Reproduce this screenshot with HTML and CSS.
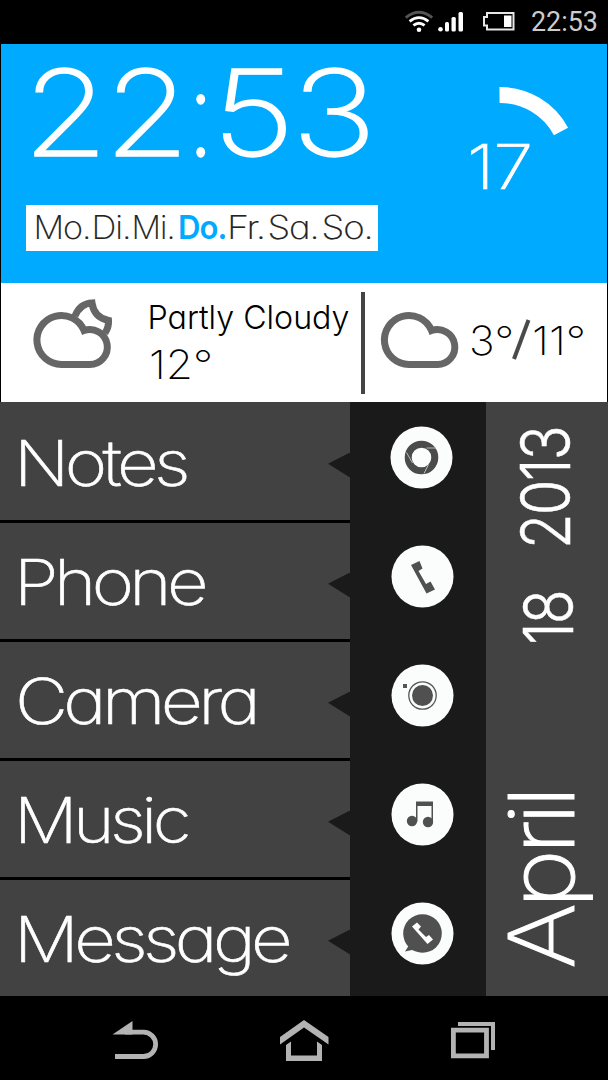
FILE: index.html
```html
<!DOCTYPE html>
<html lang="de">
<head>
<meta charset="utf-8">
<title>Home</title>
<link rel="stylesheet" href="styles.css">
</head>
<body>
<div class="phone">
  <header class="status">
    <svg class="signals" width="140" height="44" viewBox="400 0 140 44">
      <g fill="none" stroke="#fff" stroke-width="2.8">
        <path stroke="#555" d="M405.800 17.600Q419 6.800 432.200 17.600"/>
        <path d="M409.600 21.400Q419 13.800 428.400 21.400"/>
        <path d="M413.400 25.400Q419 21 424.600 25.400"/>
      </g>
      <circle cx="419" cy="29.800" r="2.300" fill="#fff"/>
      <g fill="#fff">
        <circle cx="440.500" cy="29.200" r="2.300"/>
        <rect x="445" y="22" width="4" height="9.500" rx="1.500"/>
        <rect x="451.500" y="17" width="4.300" height="14.500" rx="1.500"/>
        <rect x="458.500" y="12" width="4.500" height="19.500" rx="1.500"/>
      </g>
      <path fill="none" stroke="#e6e6e6" stroke-width="2" d="M487 13H513.500V29.500H487V25.500H484V17H487Z"/>
      <rect x="504" y="15.500" width="7.500" height="11.500" fill="#fff"/>
    </svg>
    <svg width="68" height="44"><text class="status-time" x="0" y="31" textLength="67" lengthAdjust="spacingAndGlyphs">22:53</text></svg>
  </header>

  <section class="clock">
    <div class="clock-main">
      <svg class="time" width="390" height="161" viewBox="0 44 390 161">
        <text x="23" y="156" textLength="163" lengthAdjust="spacingAndGlyphs">22</text>
        <text x="187" y="156" textLength="25" lengthAdjust="spacingAndGlyphs">:</text>
        <text x="212" y="156" textLength="161" lengthAdjust="spacingAndGlyphs">53</text>
      </svg>
      <svg class="days" width="352" height="46" viewBox="26.500 205.500 352 46">
        <text x="34" y="239" textLength="57" lengthAdjust="spacingAndGlyphs">Mo.</text>
        <text x="92" y="239" textLength="39" lengthAdjust="spacingAndGlyphs">Di.</text>
        <text x="132" y="239" textLength="43" lengthAdjust="spacingAndGlyphs">Mi.</text>
        <text class="today" x="178.500" y="239" textLength="48.500" lengthAdjust="spacingAndGlyphs">Do.</text>
        <text x="227.500" y="239" textLength="38" lengthAdjust="spacingAndGlyphs">Fr.</text>
        <text x="268" y="239" textLength="51" lengthAdjust="spacingAndGlyphs">Sa.</text>
        <text x="322" y="239" textLength="51" lengthAdjust="spacingAndGlyphs">So.</text>
      </svg>
    </div>
    <svg class="gauge" width="167" height="239" viewBox="440 44 167 239">
      <path fill="none" stroke="#fff" stroke-width="16" d="M499.500 95A69 69 0 0 1 561 131.500"/>
      <text x="467" y="189" textLength="65" lengthAdjust="spacingAndGlyphs">17</text>
    </svg>
  </section>

  <section class="weather">
    <svg class="now" width="360" height="119" viewBox="1 283 360 119">
      <g fill="none" stroke="#666" stroke-width="7">
        <path d="M84 330.500A24.500 24.500 0 1 0 61.500 364.500H89.500A17.500 17.500 0 1 0 84 330.500Z"/>
        <path d="M75 316Q80 303.500 92 303Q94 317.500 108.500 320.500Q109 327 105 333"/>
      </g>
      <text class="cond" x="147.500" y="329" textLength="202" lengthAdjust="spacingAndGlyphs">Partly Cloudy</text>
      <text class="temp" x="149" y="378.500" textLength="64" lengthAdjust="spacingAndGlyphs">12°</text>
    </svg>
    <i class="divider"></i>
    <svg class="next" width="241" height="119" viewBox="366 283 241 119">
      <path fill="none" stroke="#666" stroke-width="7" d="M431.500 330.500A24.500 24.500 0 1 0 409 364.500H437A17.500 17.500 0 1 0 431.500 330.500Z"/>
      <text class="temp" x="469" y="355" textLength="45" lengthAdjust="spacingAndGlyphs">3°</text>
      <path stroke="#4a4a4a" stroke-width="4" d="M528.500 320L514 359"/>
      <text class="temp" x="532" y="355" textLength="54" lengthAdjust="spacingAndGlyphs">11°</text>
    </svg>
  </section>

  <main class="home">
    <nav class="menu">
      <div class="item"><svg width="320" height="116"><text x="14" y="82" textLength="172" lengthAdjust="spacingAndGlyphs">Notes</text></svg><i class="notch"></i></div>
      <div class="item"><svg width="320" height="116"><text x="14" y="82" textLength="190" lengthAdjust="spacingAndGlyphs">Phone</text></svg><i class="notch"></i></div>
      <div class="item"><svg width="320" height="116"><text x="15" y="82" textLength="241" lengthAdjust="spacingAndGlyphs">Camera</text></svg><i class="notch"></i></div>
      <div class="item"><svg width="320" height="116"><text x="14" y="82" textLength="173" lengthAdjust="spacingAndGlyphs">Music</text></svg><i class="notch"></i></div>
      <div class="item"><svg width="320" height="116"><text x="14" y="82" textLength="274" lengthAdjust="spacingAndGlyphs">Message</text></svg><i class="notch"></i></div>
    </nav>
    <div class="dock">
      <svg class="app first" viewBox="-31.500 -31.500 63 63">
        <circle class="disc" r="31"/>
        <circle r="13.300" fill="none" stroke="#4b4b4b" stroke-width="7"/>
        <path fill="none" stroke="#bbb" stroke-width="1" d="M5-9.500H14.500M-15-5L-9 5.500M7 7L2.500 16"/>
      </svg>
      <svg class="app" viewBox="-31.500 -31.500 63 63">
        <circle class="disc" r="31"/>
        <path fill="#505050" d="M-11.500-11.500L-3-15.500L0-8L-4-5.500L3.500 7.500L8 5L12.500 13L4 17Z"/>
      </svg>
      <svg class="app" viewBox="-31.500 -31.500 63 63">
        <circle class="disc" r="31"/>
        <circle r="10.500" fill="#505050"/>
        <circle r="13.700" fill="none" stroke="#555" stroke-width="1.300"/>
        <rect x="-19.500" y="-11.500" width="4" height="4" fill="#555"/>
      </svg>
      <svg class="app" viewBox="-31.500 -31.500 63 63">
        <circle class="disc" r="31"/>
        <circle cx="-10.500" cy="6.500" r="5.200" fill="#505050"/>
        <circle cx="5.500" cy="7.500" r="5.200" fill="#505050"/>
        <path fill="#505050" d="M-6.500-13H10.500V8H9V-8.500H-5V7H-6.500Z"/>
      </svg>
      <svg class="app" viewBox="-31.500 -31.500 63 63">
        <circle class="disc" r="31"/>
        <circle r="19.300" fill="#505050"/>
        <path fill="#505050" d="M-17.500 6L-14 12.500L-17.500 18L-8 16Z"/>
        <path fill="#fff" d="M-10.500-7L-5.500-11L-1.500-7L-4-4L3.500 3.500L6.500 1.500L10.500 6L5 10.500Z"/>
      </svg>
    </div>
    <svg class="date" width="122" height="594" viewBox="486 402 122 594">
      <text class="num" transform="translate(570 549) rotate(-90)" textLength="122" lengthAdjust="spacingAndGlyphs">2013</text>
      <text class="num" transform="translate(573 645) rotate(-90)" textLength="54" lengthAdjust="spacingAndGlyphs">18</text>
      <text class="month" transform="translate(574 969) rotate(-90)" textLength="178" lengthAdjust="spacingAndGlyphs">April</text>
    </svg>
  </main>

  <footer class="keys">
    <svg width="608" height="84" viewBox="0 996 608 84">
      <path fill="#b3b3b3" d="M112.500 1034.500L132.500 1021V1034.500Z"/>
      <path fill="none" stroke="#b3b3b3" stroke-width="4.800" d="M125 1032.200H143.500A12 12 0 0 1 143.500 1056.500H115"/>
      <path fill="#b3b3b3" d="M304 1020L328.500 1037V1044.500L304 1027.500L280 1044.500V1037Z"/>
      <path fill="#b3b3b3" d="M286 1045L291 1041.500V1055.500H317V1041.500L322 1045V1061H286Z"/>
      <path fill="none" stroke="#b3b3b3" stroke-width="4.800" d="M453.400 1030.200H486.500V1055.800H453.400Z"/>
      <path fill="none" stroke="#b3b3b3" stroke-width="4" d="M458 1024H493V1050"/>
    </svg>
  </footer>
</div>
</body>
</html>
```
FILE: styles.css
```css
body {
  margin: 0;
  background: #000;
}

svg {
  display: block;
  overflow: visible;
}

.phone {
  width: 608px;
  height: 1080px;
  overflow: hidden;
  background: #000;
  font-family: Inter, "Open Sans", sans-serif;
  font-feature-settings: "cv11", "calt" 0;
}

.status {
  display: flex;
  justify-content: flex-end;
  height: 44px;
  padding-right: 9px;
}

.signals {
  margin-right: -9px;
}

.status-time {
  font: 27px Roboto, sans-serif;
  fill: #ccc;
}

.clock {
  display: flex;
  height: 239px;
  margin: 0 1px;
  background: #00aaff;
}

.clock-main {
  width: 439px;
}

.time {
  margin-left: -1px;
}

.time text {
  font-size: 119px;
  font-weight: 200;
  letter-spacing: -3px;
  fill: #fff;
  stroke: #fff;
  stroke-width: 1.3px;
}

.days {
  margin-left: 25px;
  background: #fff;
}

.days text {
  font-size: 33px;
  font-weight: 200;
  letter-spacing: -1px;
  fill: #222;
  stroke: #222;
  stroke-width: 0.2px;
}

.days .today {
  font-weight: 600;
  fill: #00aaff;
  stroke: none;
}

.gauge text {
  font-size: 61px;
  font-weight: 200;
  letter-spacing: -1px;
  fill: #fff;
  stroke: #fff;
  stroke-width: 0.7px;
}

.weather {
  display: flex;
  align-items: center;
  height: 119px;
  margin: 0 1px;
  background: #fff;
}

.divider {
  width: 4px;
  height: 102px;
  background: #444;
}

.next {
  margin-left: 1px;
}

.cond {
  font-size: 33px;
  font-weight: 300;
}

.temp {
  font-size: 40px;
  font-weight: 200;
}

.home {
  display: flex;
  height: 594px;
}

.menu {
  display: flex;
  flex-direction: column;
  gap: 3px;
  width: 350px;
}

.item {
  display: flex;
  align-items: center;
  justify-content: space-between;
  height: 116px;
  background: #424242;
}

.item:first-child {
  height: 118px;
}

.item:first-child svg {
  margin-top: 2px;
}

.item text {
  font-size: 63px;
  font-weight: 200;
  letter-spacing: -4px;
  fill: #fff;
  stroke: #fff;
  stroke-width: 0.6px;
}

.notch {
  width: 22px;
  height: 25px;
  margin-top: 8px;
  background: #1a1a1a;
  clip-path: polygon(0 45%, 100% 0, 100% 100%);
}

.dock {
  display: flex;
  flex-direction: column;
  align-items: center;
  gap: 56px;
  box-sizing: border-box;
  width: 136px;
  padding: 24px 0 0 9px;
  background: #1a1a1a;
}

.app {
  width: 63px;
  height: 63px;
}

.app.first {
  margin-left: -3px;
}

.disc {
  fill: #fbfcfc;
}

.date {
  background: #424242;
}

.date text {
  fill: #fff;
}

.num {
  font-size: 69px;
  font-weight: 300;
  letter-spacing: -2px;
  stroke: #fff;
  stroke-width: 0.5px;
}

.month {
  font-size: 91px;
  font-weight: 200;
  letter-spacing: -5px;
  stroke: #fff;
  stroke-width: 0.9px;
}

.keys {
  height: 84px;
  background: #000;
}
```
